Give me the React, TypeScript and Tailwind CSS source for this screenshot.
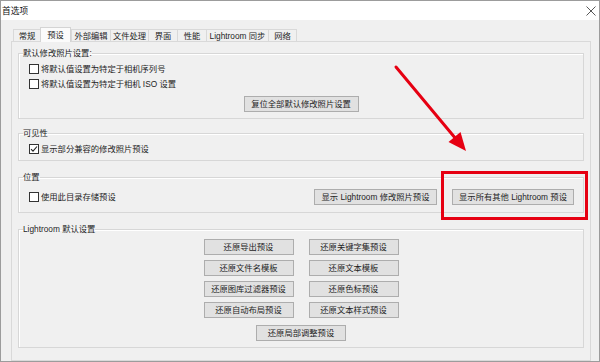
import React from "react";

const Btn = ({ children, w }: { children: React.ReactNode; w: string }) => (
  <div
    className={`${w} h-[16px] flex items-center justify-center bg-[#e1e1e1] border border-[#adadad] text-[8.3px] leading-[10px] text-[#1e1e1e] whitespace-nowrap`}
  >
    {children}
  </div>
);

const Check = ({ checked, label }: { checked?: boolean; label: string }) => (
  <div className="flex items-center h-[15px] gap-[2px]">
    <div className="w-[10px] h-[10px] border border-[#333] bg-white flex items-center justify-center">
      {checked && (
        <svg width="8" height="8" viewBox="0 0 8 8">
          <path d="M1 4.2 L3 6.2 L7 1.5" fill="none" stroke="#222" strokeWidth="1.1" />
        </svg>
      )}
    </div>
    <span className="text-[8.3px] leading-[10px] text-[#1e1e1e] whitespace-nowrap">{label}</span>
  </div>
);

const Legend = ({ children }: { children: React.ReactNode }) => (
  <legend className="ml-[4px] h-[11px] text-[8.3px] leading-[11px] text-[#1e1e1e] whitespace-nowrap">
    {children}
  </legend>
);

const tabs: { label: string; w: string; sel?: boolean }[] = [
  { label: "常规", w: "w-[27px]" },
  { label: "预设", w: "w-[31px]", sel: true },
  { label: "外部编辑", w: "w-[39px]" },
  { label: "文件处理", w: "w-[38px]" },
  { label: "界面", w: "w-[29px]" },
  { label: "性能", w: "w-[29px]" },
  { label: "Lightroom 同步", w: "w-[62px]" },
  { label: "网络", w: "w-[29px]" },
];

export default function App() {
  return (
    <div className="relative w-[600px] h-[362px] overflow-hidden border border-[#9c9c9c] bg-[#f0f0f0] flex flex-col font-['Liberation_Sans','Noto_Sans_CJK_SC',sans-serif]">
      {/* title bar */}
      <div className="h-[19px] bg-white flex items-center justify-between pl-[1px] pr-[2px] shrink-0">
        <span className="text-[8.7px] leading-[10px] text-[#111]">首选项</span>
        <svg width="10" height="10" viewBox="0 0 10 10" className="mr-[1px]">
          <path d="M0.5 0.5 L9.5 9.5 M9.5 0.5 L0.5 9.5" stroke="#444" strokeWidth="0.9" />
        </svg>
      </div>

      {/* tabs */}
      <div className="pl-[12px] pt-[7px] flex items-end h-[21px] shrink-0">
        {tabs.map((t, i) => (
          <div
            key={t.label}
            className={
              t.sel
                ? `${t.w} h-[15px] -mb-[1px] relative z-10 bg-[#fbfbfb] border-l border-t border-r border-[#d4d4d4] flex items-center justify-center text-[8.3px] leading-[10px] text-[#1e1e1e] whitespace-nowrap`
                : `${t.w} h-[12px] bg-[#f0f0f0] border-l border-t border-[#d9d9d9] ${i === tabs.length - 1 ? "border-r" : ""} flex items-center justify-center text-[8.3px] leading-[10px] text-[#1e1e1e] whitespace-nowrap`
            }
          >
            {t.label}
          </div>
        ))}
      </div>

      {/* panel */}
      <div className="ml-[10px] w-[580px] flex-1 border border-[#d9d9d9] bg-[#f0f0f0] px-[6px] pt-[6px] flex flex-col">
        {/* group 1 */}
        <fieldset className="border border-[#d7d7d7] shadow-[inset_1px_1px_0_#fff] px-0 pb-[6px]">
          <Legend>默认修改照片设置:</Legend>
          <div className="pl-[10px] pt-[2px] flex flex-col">
            <Check label="将默认值设置为特定于相机序列号" />
            <Check label="将默认值设置为特定于相机 ISO 设置" />
          </div>
          <div className="flex justify-center mt-[5px]">
            <Btn w="w-[115px]">复位全部默认修改照片设置</Btn>
          </div>
        </fieldset>

        {/* group 2 */}
        <fieldset className="mt-[9px] border border-[#d7d7d7] shadow-[inset_1px_1px_0_#fff] px-0 pb-[4px]">
          <Legend>可见性</Legend>
          <div className="pl-[10px] pt-[2px]">
            <Check checked label="显示部分兼容的修改照片预设" />
          </div>
        </fieldset>

        {/* group 3 */}
        <fieldset className="mt-[11px] border border-[#d7d7d7] shadow-[inset_1px_1px_0_#fff] px-0 pb-[5px]">
          <Legend>位置</Legend>
          <div className="pl-[10px] pr-[9px] pt-[4px] flex items-center h-[20px] box-content">
            <Check label="使用此目录存储预设" />
            <div className="flex-1" />
            <div className="flex gap-[15px]">
              <Btn w="w-[123px]">显示 Lightroom 修改照片预设</Btn>
              <Btn w="w-[122px]">显示所有其他 Lightroom 预设</Btn>
            </div>
          </div>
        </fieldset>

        {/* group 4 */}
        <fieldset className="mt-[11px] border border-[#d7d7d7] shadow-[inset_1px_1px_0_#fff] px-0 pb-[6px]">
          <Legend>Lightroom 默认设置</Legend>
          <div className="pt-[4px] flex flex-col items-center">
            <div className="grid grid-cols-2 gap-x-[15px] gap-y-[5px]">
              <Btn w="w-[90px]">还原导出预设</Btn>
              <Btn w="w-[90px]">还原关键字集预设</Btn>
              <Btn w="w-[90px]">还原文件名模板</Btn>
              <Btn w="w-[90px]">还原文本模板</Btn>
              <Btn w="w-[90px]">还原图库过滤器预设</Btn>
              <Btn w="w-[90px]">还原色标预设</Btn>
              <Btn w="w-[90px]">还原自动布局预设</Btn>
              <Btn w="w-[90px]">还原文本样式预设</Btn>
            </div>
            <div className="mt-[7px]">
              <Btn w="w-[90px]">还原局部调整预设</Btn>
            </div>
          </div>
        </fieldset>
      </div>

      {/* red highlight box */}
      <div className="absolute left-[440px] top-[170px] w-[147px] h-[49px] border-[3px] border-[#e60012]" />

      {/* red arrow */}
      <svg className="absolute left-0 top-0 pointer-events-none" width="600" height="362" viewBox="0 0 600 362">
        <line x1="395" y1="66" x2="455" y2="138" stroke="#e60012" strokeWidth="3" strokeLinecap="round" />
        <polygon points="465,150 447.5,141 459.5,131" fill="#e60012" />
      </svg>
    </div>
  );
}
